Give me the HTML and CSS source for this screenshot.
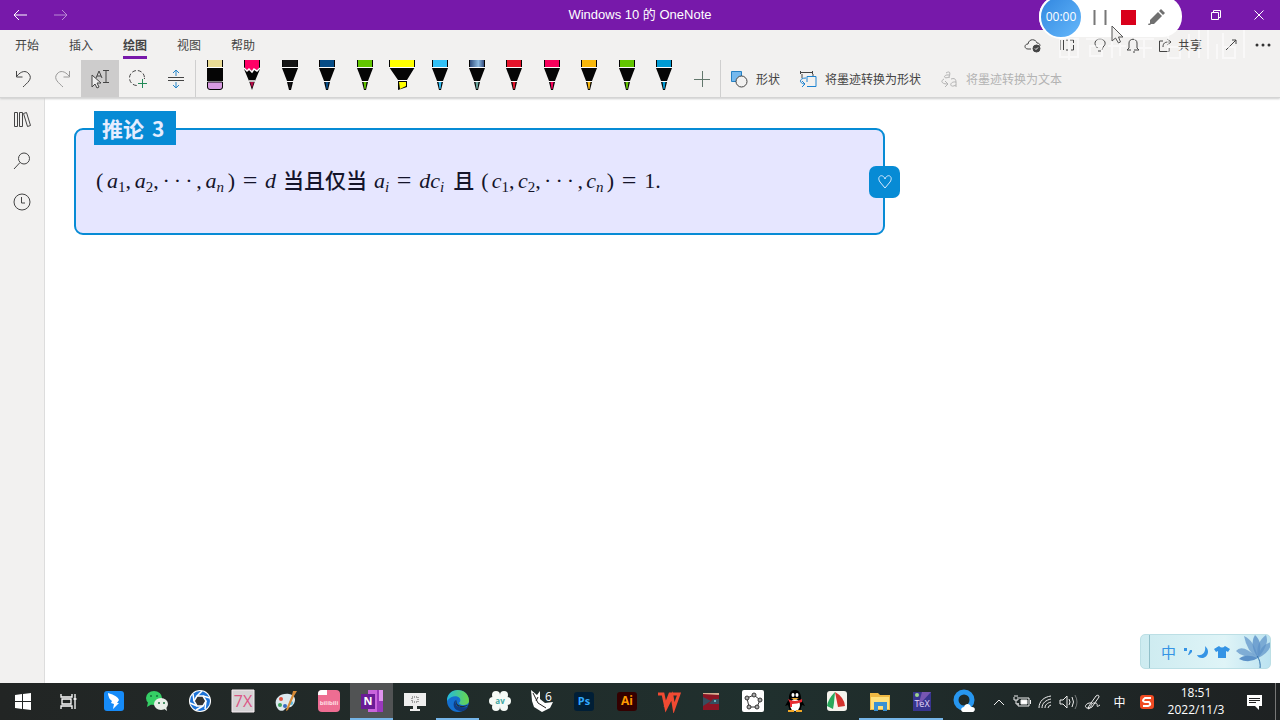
FILE: index.html
```html
<!DOCTYPE html>
<html lang="zh-CN">
<head>
<meta charset="utf-8">
<title>Windows 10 的 OneNote</title>
<link rel="stylesheet" href="styles.css">
</head>
<body>
<svg class="defs" aria-hidden="true">
  <symbol id="pen" viewBox="0 0 26 30">
    <path fill="currentColor" d="M5 0h16v7H5z"/><path d="M5 0h1v7H5zM20 0h1v7h-1z"/>
    <path d="M5 8h16l-5 13h-6z"/>
    <path fill="#fff" d="M5 7h16v1H5zM10 21h6v1h-6z" opacity=".8"/>
    <path d="M10 22h6l-2 8h-2z"/><path fill="currentColor" d="M11.500 22h3l-1 7h-1z"/>
  </symbol>
</svg>
<div class="app">
  <header class="titlebar">
    <nav class="history">
      <button aria-label="后退"><svg width="16" height="12" viewBox="0 0 16 12"><path d="M15 6H2M7 1L2 6l5 5"/></svg></button>
      <button class="dim" aria-label="前进"><svg width="16" height="12" viewBox="0 0 16 12"><path d="M1 6h13M9 1l5 5-5 5"/></svg></button>
    </nav>
    <h1>Windows 10 的 OneNote</h1>
    <div class="window-buttons">
      <button aria-label="还原"><svg width="12" height="12" viewBox="0 0 12 12"><path d="M1.500 3.500h7v7h-7zM3.500 3V1.500h7v7H9"/></svg></button>
      <button aria-label="关闭"><svg width="12" height="12" viewBox="0 0 12 12"><path d="M1.500 1.500l9 9M10.500 1.500l-9 9"/></svg></button>
    </div>
    <div class="recorder">
      <div class="timer">00:00</div>
      <button aria-label="暂停"><svg width="16" height="16" viewBox="0 0 16 16"><path d="M2.500 1v15M13.500 1v15" stroke="#777" stroke-width="2"/></svg></button>
      <button aria-label="停止"><svg width="16" height="16" viewBox="0 0 16 16"><path fill="#d9001b" stroke="none" d="M1 1h15v15H1z"/></svg></button>
      <button aria-label="画笔"><svg width="18" height="18" viewBox="0 0 18 18"><path fill="#707070" stroke="none" d="M2 12l8-8 4 4-8 8h-4zM11 3l2-2 4 4-2 2zM1 15l2 2H0z"/></svg></button>
      <svg class="pointer" width="14" height="20" viewBox="0 0 14 20"><path fill="#f2f1f0" stroke="#555" d="M2 1v15l3.500-3 3 5 2-1-2-5H13z"/></svg>
    </div>
  </header>

  <section class="ribbon">
    <div class="tabs-row">
      <nav class="tabs">
        <button>开始</button><button>插入</button><button class="selected">绘图</button><button>视图</button><button>帮助</button>
      </nav>
      <div class="actions">
        <button aria-label="同步"><svg width="18" height="16" viewBox="0 0 18 16"><path d="M7 12H4c-4 0-4-5 0-5 1-6 8-5 9-1 2 0 3 1 3 3"/><circle cx="12.500" cy="11.500" r="3.500" fill="#444"/><path stroke="#fff" d="M11 11.500l1 1 2-2"/></svg></button>
        <button aria-label="阅读视图"><svg width="16" height="16" viewBox="0 0 16 16"><path d="M1.500 3v10M4.500 3v10M7 3h2M7 13h2M11 3h3.500v3M14.500 8v5H12" /></svg></button>
        <button aria-label="提示"><svg width="16" height="16" viewBox="0 0 16 16"><path d="M5.500 11C1 7 3 2 8 2s7 5 3 8l-1 3M6 14h3"/></svg></button>
        <button aria-label="通知"><svg width="16" height="16" viewBox="0 0 16 16"><path d="M4 11V6c0-5 8-5 8 0v5l2 2H9M2 13l2-2M2 13h4M8 15h2"/></svg></button>
        <button class="share"><svg width="14" height="16" viewBox="0 0 14 16"><path d="M5 4H1.500v10.500H11V11M5 10c0-4 2-5 6-5M9 2l4 3-4 3"/></svg>共享</button>
        <button aria-label="全屏"><svg width="14" height="14" viewBox="0 0 14 14"><path d="M2 12L12 2M8 2h4v4"/></svg></button>
        <button aria-label="更多"><svg width="16" height="6" viewBox="0 0 16 6"><g fill="#333" stroke="none"><circle cx="2" cy="3" r="1.500"/><circle cx="8" cy="3" r="1.500"/><circle cx="14" cy="3" r="1.500"/></g></svg></button>
      </div>
      <svg class="watermark" viewBox="0 0 200 46" aria-hidden="true"><g fill="none" stroke="#fff" stroke-width="2" opacity=".5"><path d="M4 17h18v18H4zM13 14v24M30 17h18M34 24h12v10H34zM56 16v20M52 24h18M64 17v17M78 17h20M82 26h14M88 17v19M112 9v27h12V25h-12M133 12v24M143 6v30M152 4v33M161 22v15M167 11v25h12V25h-12M188 6v30"/></g></svg>
    </div>

    <div class="tools">
      <div class="edit-tools">
        <button aria-label="撤消"><svg width="20" height="20" viewBox="0 0 20 20"><path d="M2.500 2v6h6M3 7c4-5 9-6 12-2 4 5-2 9-6 13"/></svg></button>
        <button class="dim" aria-label="恢复"><svg width="20" height="20" viewBox="0 0 20 20"><path d="M17.500 2v6h-6M17 7C13 2 8 1 5 5c-4 5 2 9 6 13"/></svg></button>
        <button class="chosen" aria-label="选择对象或文本"><svg width="20" height="20" viewBox="0 0 20 20"><path d="M13 1.500h6M16 2v11M13 13.500h6M6 9l3-7 3 7M7 7h4"/><path fill="#eee" d="M2 6v12l3-3 2 4 2-1-2-4h4z"/></svg></button>
        <button aria-label="套索选择"><svg width="20" height="20" viewBox="0 0 20 20"><circle cx="9" cy="9" r="7.500" stroke-dasharray="4 2"/><path stroke="#f2f1f0" stroke-width="5" d="M10 15h9M15 10v9"/><path stroke="#218a56" d="M10 14.500h9M14.500 10v9"/></svg></button>
        <button aria-label="插入空间"><svg width="18" height="20" viewBox="0 0 18 20"><path d="M1 8.500h16M1 11.500h16"/><path stroke="#2786c9" d="M9 7V1M6 4l3-3 3 3M9 13v6M6 16l3 3 3-3"/></svg></button>
      </div>
      <div class="pens">
        <button aria-label="橡皮擦"><svg width="26" height="30" viewBox="0 0 26 30"><path d="M5 0h16v29H5z"/><path fill="#eadc95" d="M6 0h14v7H6z"/><path fill="#fff" d="M5 7h16v1H5zM5 21h16v1H5z"/><path fill="#f2f1f0" d="M5 27v3h16v-3l-2 3H7z"/><path fill="#d79be0" stroke="#050505" d="M5.500 22h15v5q0 2.500-2.500 2.500H8q-2.500 0-2.500-2.500z"/></svg></button>
        <button aria-label="铅笔"><svg width="26" height="30" viewBox="0 0 26 30"><path d="M5 0h16v9l-5 12-3 9-3-9L5 9z"/><path fill="#ff0066" d="M6 0h14v8l-3 3-2-2-2 2-2-2-2 2-3-3z"/><path fill="none" stroke="#fff" stroke-width="1.500" d="M5 8l3 3 2-2 3 3 2-3 3 2 3-3M10 21h6"/><path fill="#b30c46" d="M11 22h4l-2 6z"/></svg></button>
        <button class="black" aria-label="黑色笔"><svg width="26" height="30"><use href="#pen"/></svg></button>
        <button class="navy" aria-label="深蓝色笔"><svg width="26" height="30"><use href="#pen"/></svg></button>
        <button class="green" aria-label="绿色笔"><svg width="26" height="30"><use href="#pen"/></svg></button>
        <button aria-label="荧光笔"><svg width="26" height="30" viewBox="0 0 26 30"><path d="M0 0h26v7l-8 13v7l-9 3V20L0 7z"/><path fill="#ff0" d="M1 0h24v7H1zM10 22h7v4l-6 3z"/><path fill="#fff" d="M0 7h26v1H0zM9 20h9v1H9z"/></svg></button>
        <button class="sky" aria-label="天蓝色笔"><svg width="26" height="30"><use href="#pen"/></svg></button>
        <button class="galaxy" aria-label="银河笔"><svg width="26" height="30"><defs><linearGradient id="galaxy-cap"><stop stop-color="#315080"/><stop offset=".6" stop-color="#8dbbe0"/><stop offset="1" stop-color="#354d80"/></linearGradient></defs><use href="#pen"/><path fill="url(#galaxy-cap)" d="M6 0h14v7H6z"/></svg></button>
        <button class="red" aria-label="红色笔"><svg width="26" height="30"><use href="#pen"/></svg></button>
        <button class="pink" aria-label="粉色笔"><svg width="26" height="30"><use href="#pen"/></svg></button>
        <button class="gold" aria-label="金色笔"><svg width="26" height="30"><use href="#pen"/></svg></button>
        <button class="green" aria-label="浅绿色笔"><svg width="26" height="30"><use href="#pen"/></svg></button>
        <button class="blue" aria-label="蓝色笔"><svg width="26" height="30"><use href="#pen"/></svg></button>
      </div>
      <button class="add" aria-label="添加笔"><svg width="16" height="16" viewBox="0 0 16 16"><path stroke="#62776c" d="M0 8.500h16M8.500 0v16"/></svg></button>
      <div class="convert">
        <button><svg width="18" height="18" viewBox="0 0 18 18"><path fill="#75b9ee" stroke="#2581c4" d="M1.500 1.500h10v10h-10z"/><circle cx="11.500" cy="11.500" r="5.500" fill="#f2f1f0"/></svg>形状</button>
        <button><svg width="18" height="18" viewBox="0 0 18 18"><path d="M1 2.500h13M1.500 1v3M13.500 1v3M3 4v4M14 4v2"/><path stroke="#1c82d0" d="M8 12V6.500h9v10H8M7 8C0 8 0 13 5 14M3 11l3 3-3 3"/></svg>将墨迹转换为形状</button>
        <button class="disabled" disabled><svg width="18" height="18" viewBox="0 0 18 18"><path d="M6 3c5-3 4 1 3 5M9 5c-6-1-6 5 0 2M4 9c-4 2-2 5 3 5M5 11l3 3-3 3M11 9c6-2 5 3 5 8M16 12c-7-1-7 7 0 3"/></svg>将墨迹转换为文本</button>
      </div>
    </div>
  </section>

  <div class="workspace">
    <aside class="sidebar">
      <button aria-label="笔记本"><svg width="18" height="18" viewBox="0 0 18 18"><path d="M1.500 1.500h3v14h-3zM6.500 1.500h3v14h-3zM10.500 2.500l3-1 4 13-3 1z"/></svg></button>
      <button aria-label="搜索"><svg width="18" height="18" viewBox="0 0 18 18"><circle cx="11" cy="6.500" r="5.500"/><path d="M7 10.500L1 17"/></svg></button>
      <button aria-label="最近的笔记"><svg width="18" height="18" viewBox="0 0 18 18"><circle cx="9" cy="9" r="8"/><path d="M8.500 4v6H12"/></svg></button>
    </aside>
    <main class="page">
      <article class="corollary">
        <h2><span>推论</span><span>3</span></h2>
        <p class="formula">
          <span class="tuple"><b>(</b><span><i>a</i><sub>1</sub>,</span><span><i>a</i><sub>2</sub>,</span><span class="dots"><b>·</b><b>·</b><b>·</b></span><span>,</span><span><i>a</i><sub><i>n</i></sub></span><b>)</b></span>
          <span class="equals">=</span><i>d</i>
          <span class="words">当且仅当</span>
          <span><i>a</i><sub><i>i</i></sub></span><span class="equals">=</span><span class="product"><i>dc</i><sub><i>i</i></sub></span>
          <span class="words">且</span>
          <span class="tuple narrow"><b>(</b><span><i>c</i><sub>1</sub>,</span><span><i>c</i><sub>2</sub>,</span><span class="dots"><b>·</b><b>·</b><b>·</b></span><span>,</span><span><i>c</i><sub><i>n</i></sub></span><b>)</b></span>
          <span class="equals">=</span><span>1.</span>
        </p>
        <div class="heart"><svg width="16" height="16" viewBox="0 0 16 16"><path d="M8 14L3 8C-1 2 6-1 8 5c2-6 9-3 5 3z"/></svg></div>
      </article>
    </main>
    <div class="ime">
      <button>中</button>
      <svg width="8" height="12" viewBox="0 0 8 12"><path fill="#3594e5" d="M0 2h3v3H0zM6 4h2v2L5 9H4z"/></svg>
      <svg width="12" height="12" viewBox="0 0 12 12"><path fill="#3594e5" d="M8 0c6 5 2 12-3 12-3 0-4-1-5-3 6 1 9-3 8-9z"/></svg>
      <svg width="16" height="14" viewBox="0 0 16 14"><path fill="#3594e5" d="M5 1q3 3 6 0l5 3-2 3-2-1v7H4V6L2 7 0 4z"/></svg>
      <svg class="flower" width="38" height="35" viewBox="0 0 38 35"><g fill="#5c91c8"><path d="M23 24Q12 18 9 2q10 4 14 22z" opacity=".7"/><path d="M23 24Q14 11 20 1q9 8 3 23z" opacity=".8"/><path d="M23 24Q20 9 31 1q4 9-8 23z" opacity=".7"/><path d="M23 24Q24 12 36 8q0 10-13 16zM23 24Q7 9 1 17q5 6 22 7z" opacity=".7"/><path d="M23 24Q10 19 4 25q10 5 19-1z"/></g><path d="M22 22q4 5 3 13" fill="none" stroke="#3271ab"/></svg>
    </div>
  </div>

  <footer class="taskbar">
    <nav class="apps">
      <button aria-label="开始菜单"><svg viewBox="0 0 24 24"><path fill="#fff" d="M4 6l7-1v7H4zM12 5l8-1v8h-8zM4 13h7v7l-7-1zM12 13h8v8l-8-1z"/></svg></button>
      <button aria-label="任务视图"><svg viewBox="0 0 24 24"><path fill="none" stroke="#fff" stroke-width="1.300" d="M4 5v3h11V5M5 10h9v5H5zM4 20v-3h11v3M18 5v15M16.500 10h3"/></svg></button>
      <button aria-label="飞书"><svg viewBox="0 0 24 24"><rect x="2" y="2" width="20" height="20" rx="3" fill="#168bf8"/><path fill="#fff" d="M6 4q10 3 11 7l-2 3h2l-6 6 1-5-3-1 1-2q-4-3-4-8z"/></svg></button>
      <button aria-label="微信"><svg viewBox="0 0 24 24"><ellipse cx="9" cy="9" rx="8" ry="7" fill="#35ce65"/><path fill="#35ce65" d="M3 13l-1 5 5-3z"/><ellipse cx="16" cy="15" rx="7" ry="6" fill="#e8eee8"/><path fill="#e8eee8" d="M18 19l4 3-1-5z"/><g fill="#16713b"><circle cx="6" cy="7" r="1"/><circle cx="12" cy="7" r="1"/><circle cx="14" cy="14" r="1"/><circle cx="19" cy="14" r="1"/></g></svg></button>
      <button aria-label="照片"><svg viewBox="0 0 24 24"><circle cx="12" cy="12" r="11" fill="#fff"/><circle cx="12" cy="12" r="10" fill="#1d73d8"/><path fill="#333" stroke="#fff" stroke-width="1.500" d="M9 7h6l3 5-3 5H9l-3-5z"/><path stroke="#fff" stroke-width="1.500" d="M9 7l5-5M15 7l7 2M18 12l-1 8M15 17l-7 4M9 17l-7-3M6 12l-1-7"/></svg></button>
      <button aria-label="7X"><svg viewBox="0 0 24 24"><path fill="#d6d3d5" stroke="#f8eef2" d="M1 1h22v22H1z"/><text x="12" y="18" text-anchor="middle" font-size="16" fill="#dc5685">7X</text></svg></button>
      <button aria-label="画图"><svg viewBox="0 0 24 24"><path fill="#dce8ee" d="M2 16C0 9 7 4 15 5c6 1 8 6 4 11-3 4-6 1-8 4-3 4-8 1-9-4z"/><circle cx="7" cy="10" r="2" fill="#df513f"/><circle cx="6" cy="16" r="2" fill="#3ca45e"/><circle cx="11" cy="17" r="2" fill="#356bc0"/><circle cx="17" cy="14" r="2" fill="#58b9df"/><path fill="#d78b37" d="M19 2l4 0-3 5-6 14-2 1 1-4 5-12z"/></svg></button>
      <button aria-label="哔哩哔哩"><svg viewBox="0 0 24 24"><rect x="1" y="1" width="22" height="22" rx="4" fill="#ee6d92"/><path fill="#fff" d="M1 5q0-4 4-4h5v5H1z"/><text x="12" y="16" text-anchor="middle" font-size="6" font-weight="bold" fill="#ffe0e8">bilibili</text></svg></button>
      <button class="current" aria-label="OneNote"><svg viewBox="0 0 24 24"><path fill="#ca64dc" d="M8 1h15v22H8z"/><path fill="#9b38bd" d="M17 1h6v22h-6z"/><path fill="#e092ee" d="M19 1h4v11h-4z"/><path fill="#6b1b96" d="M1 5h14v15H1z"/><text x="8" y="16" text-anchor="middle" font-size="11" font-weight="bold" fill="#fff">N</text></svg></button>
      <button aria-label="投屏"><svg viewBox="0 0 24 24"><path fill="#eee" d="M1 4h22v13h-9v3h3v2H7v-2h3v-3H1z"/><path fill="none" stroke="#555" stroke-dasharray="1 1" d="M9 8h6v5H9z"/></svg></button>
      <button class="running" aria-label="Edge"><svg viewBox="0 0 24 24"><defs><linearGradient id="edge-top"><stop stop-color="#22b9df"/><stop offset="1" stop-color="#69d649"/></linearGradient></defs><circle cx="12" cy="12" r="11" fill="#146fcf"/><path fill="url(#edge-top)" d="M1 12C1-3 23-2 23 12c0 5-9 5-10 2 5-5-5-11-12-2z"/><path fill="#103c83" d="M10 11q-3 9 12 7c-3 6-12 5-14 0-1-3 0-6 2-7z"/><path fill="#232b2c" d="M12 9c-3 3-2 8 5 8l5-1c-3 3-13 4-12-4z"/></svg></button>
      <button aria-label="花瓣"><svg viewBox="0 0 24 24"><g fill="#f5faf6"><circle cx="8" cy="6" r="4"/><circle cx="16" cy="6" r="4"/><circle cx="19" cy="12" r="4"/><circle cx="16" cy="18" r="4"/><circle cx="8" cy="18" r="4"/><circle cx="5" cy="12" r="4"/><circle cx="12" cy="12" r="6"/></g><text x="12" y="15" text-anchor="middle" font-size="8" font-weight="bold" fill="#42a8a1">av</text></svg></button>
      <button aria-label="Rhino 6"><svg viewBox="0 0 24 24"><path fill="#fff" d="M1 1l6 5 3-4v8l5 4 8-1-3 6-8 4-8-5-2-6z"/><path stroke="#222" d="M3 4l5 10 8 5M8 8l-2 4" fill="none"/><text x="15" y="12" font-size="12" fill="#fff">6</text></svg></button>
      <button aria-label="Photoshop"><svg viewBox="0 0 24 24"><rect x="2" y="3" width="20" height="19" rx="3" fill="#001e36"/><text x="12" y="16" text-anchor="middle" font-size="11" font-weight="bold" fill="#31a8ff">Ps</text></svg></button>
      <button aria-label="Illustrator"><svg viewBox="0 0 24 24"><rect x="2" y="3" width="20" height="19" rx="3" fill="#330000"/><text x="12" y="16" text-anchor="middle" font-size="12" font-weight="bold" fill="#ff9a00">Ai</text></svg></button>
      <button aria-label="WPS"><svg viewBox="0 0 24 24"><path fill="none" stroke="#f14a32" stroke-width="3" d="M1 5h5l3 14 6-12 2 12 5-14h-9L8 18"/></svg></button>
      <button aria-label="录制工具"><svg viewBox="0 0 24 24"><path fill="#354f5f" d="M4 4h16v17H4z"/><path fill="#d6ae91" d="M4 4h16v2H4z"/><path fill="#8b1524" d="M4 5l16 1v4h-6l-4 5h10v6H4v-4l8-5-8-4z"/><path fill="#65b4bd" d="M15 11h2v2h-2z"/></svg></button>
      <button aria-label="GeoGebra"><svg viewBox="0 0 24 24"><rect x="1" y="1" width="22" height="22" rx="2" fill="#fff"/><g stroke="#333" fill="#aaa"><path fill="none" d="M6 9l7-3 6 5-3 7H8z"/><circle cx="6" cy="9" r="2"/><circle cx="13" cy="6" r="2"/><circle cx="19" cy="11" r="2"/><circle cx="16" cy="18" r="2"/><circle cx="8" cy="18" r="2"/></g></svg></button>
      <button aria-label="QQ"><svg viewBox="0 0 24 24"><path d="M6 10C5-2 19-2 18 10l4 7-3-1-2 6H7l-2-6-3 1z"/><ellipse cx="12" cy="16" rx="5" ry="6" fill="#fff"/><ellipse cx="10" cy="6" rx="1.500" ry="2" fill="#fff"/><ellipse cx="14" cy="6" rx="1.500" ry="2" fill="#fff"/><path fill="#f2a827" d="M8 9h8l-4 2zM5 21h6v2H5zM13 21h6v2h-6z"/><path fill="#e92b31" d="M5 10q7 4 14 0v3q-5 2-10 2v3H7v-4z"/></svg></button>
      <button aria-label="几何画板"><svg viewBox="0 0 24 24"><rect x="2" y="2" width="20" height="20" rx="3" fill="#f4f3ed"/><path fill="#d3322d" d="M10 3q9 5 10 14l-7 1z"/><path fill="#28a75b" d="M10 3q-7 7-8 14l6 3 1-6z"/></svg></button>
      <button class="running" aria-label="文件资源管理器"><svg viewBox="0 0 24 24"><path fill="#efb943" d="M2 4h8l2 2h10v15H2z"/><path fill="#ffe07b" d="M3 8h18v12H3z"/><path fill="#3a91d2" d="M6 13h13v9h-4v-5h-5v5H6z"/></svg></button>
      <button class="running" aria-label="TeX"><svg viewBox="0 0 24 24"><path fill="#38358f" d="M3 3h18v19H3z"/><path fill="#7756b2" d="M12 3h9L8 17z"/><circle cx="7" cy="6" r="2" fill="#9ed58c"/><text x="12" y="18" text-anchor="middle" font-size="9" fill="#e5d8fa">TeX</text></svg></button>
      <button aria-label="QQ浏览器"><svg viewBox="0 0 24 24"><circle cx="12" cy="11" r="8" fill="none" stroke="#2796ef" stroke-width="5"/><path fill="#fff" d="M11 23c-3-1-2-5 1-5 1-4 6-4 7 0 5-1 5 5 1 5z"/></svg></button>
    </nav>
    <div class="tray">
      <button aria-label="显示隐藏的图标"><svg viewBox="0 0 20 20"><path d="M5 13l5-5 5 5"/></svg></button>
      <button aria-label="电源"><svg viewBox="0 0 20 20"><path d="M7 6h10v8H6v-3M18.500 8v4M2 5v3h4V5M3 3v2M5 3v2M4 8v4h3"/><path fill="#fff" d="M9 8h6v4H9z"/></svg></button>
      <button aria-label="网络"><svg viewBox="0 0 20 20"><path d="M4 16C4 9 9 5 16 4M7 16c0-5 4-8 9-9M10 16c0-3 2-5 6-6M13 16q0-2 3-3"/></svg></button>
      <button aria-label="音量"><svg viewBox="0 0 20 20"><path d="M2 8h3l4-4v12l-4-4H2zM11 7q2 3 0 6M14 5q3 5 0 10"/><path opacity=".4" d="M17 3q4 7 0 14"/></svg></button>
      <button class="wide" aria-label="手写"><svg viewBox="0 0 20 20"><path d="M6 14L13 4q3-2 3 1l-7 10-4 2zM9 11c-6-1-9 5-4 5 4 1 2-6 7-5 5 0-1 6 5 2"/></svg></button>
      <button class="wide">中</button>
      <button class="wide" aria-label="搜狗输入法"><svg viewBox="0 0 20 20"><rect x="3" y="3" width="14" height="14" rx="3" fill="#f04b23" stroke="none"/><path stroke="#fff" stroke-width="2" d="M14 6H8q-4 3 0 4h4q3 3-1 4H6"/></svg></button>
      <time datetime="2022-11-03T18:51"><span>18:51</span><span>2022/11/3</span></time>
      <button class="messages" aria-label="通知中心"><svg viewBox="0 0 20 20"><path fill="#fff" stroke="none" d="M3 3h15v11h-3v4l-4-4H3z"/><path stroke="#222" d="M5 6.500h11M5 8.500h11M5 10.500h7"/></svg></button>
    </div>
  </footer>
</div>
</body>
</html>
```
FILE: styles.css
```css
* { box-sizing: border-box; }
body { margin: 0; font-family: "Liberation Sans", "Noto Sans CJK SC", sans-serif; }
button { display: flex; align-items: center; justify-content: center; padding: 0; border: 0; background: none; color: inherit; font: inherit; }
svg { display: block; flex: none; }
.defs { position: absolute; width: 0; height: 0; }
.app { height: 100vh; display: flex; flex-direction: column; background: #fff; overflow: hidden; }

.titlebar { position: relative; z-index: 3; flex: 0 0 30px; display: grid; grid-template-columns: 1fr auto 1fr; align-items: center; background: #7719aa; color: #fff; }
.titlebar h1 { margin: 0; font: 13px/30px "Liberation Sans", "Noto Sans CJK SC", sans-serif; }
.history { display: flex; gap: 25px; padding-left: 12px; }
.titlebar svg { fill: none; stroke: currentColor; }
.dim { opacity: .5; }
.window-buttons { justify-self: end; display: flex; gap: 31px; padding-right: 15px; }
.recorder { position: absolute; top: -4px; right: 98px; width: 143px; height: 41px; display: flex; align-items: center; gap: 12px; border-radius: 20px; background: #fff; }
.timer { width: 44px; height: 44px; margin-right: -3px; border: 2px solid #fff; border-radius: 50%; background: linear-gradient(135deg, #3186df, #65b8fb); font: 12px/40px "Open Sans", sans-serif; text-align: center; }
.recorder .pointer { position: absolute; left: 71px; top: 29px; }

.ribbon { position: relative; z-index: 2; flex: none; background: #f2f1f0; border-bottom: 1px solid #d4d4d4; box-shadow: 0 1px 2px #ccc; color: #444; font: 12px/16px "Noto Sans CJK SC", sans-serif; }
.ribbon svg { fill: none; stroke: currentColor; }
.tabs-row { position: relative; display: flex; justify-content: space-between; height: 30px; }
.tabs { display: flex; gap: 30px; padding-left: 15px; }
.tabs button { height: 29px; border-bottom: 3px solid transparent; padding-top: 3px; }
.tabs .selected { border-color: #7719aa; font-weight: 700; }
.actions { display: flex; align-items: center; gap: 17px; padding-right: 9px; }
.actions .share { gap: 6px; margin-right: 5px; }
.watermark { position: absolute; top: -8px; right: 24px; width: 200px; height: 46px; }
.tools { display: flex; height: 37px; }
.edit-tools { display: flex; padding-left: 5px; border-right: 1px solid #cfcfcf; }
.edit-tools button { width: 38px; }
.edit-tools .chosen { background: #cdcccc; }
.pens { flex: 0 0 487px; display: flex; }
.pens button { flex: 1; height: 30px; }
.pens svg { fill: #050505; stroke: none; }
.black { color: #151515; } .navy { color: #064c86; } .green { color: #62c500; }
.sky { color: #32c0f5; } .galaxy { color: #6aa69e; } .red { color: #e5132a; }
.pink { color: #f8005b; } .gold { color: #f8b80c; } .blue { color: #009bd4; }
.add { width: 38px; border-right: 1px solid #cfcfcf; }
.convert { display: flex; gap: 19px; padding-left: 9px; white-space: nowrap; }
.convert button { gap: 8px; }
.convert .disabled { color: #b3b3b3; }

.workspace { position: relative; flex: 1; min-height: 0; display: flex; }
.sidebar { flex: 0 0 45px; display: flex; flex-direction: column; align-items: center; gap: 23px; padding-top: 13px; border-right: 1px solid #ddd; background: #f2f1f0; color: #444; }
.sidebar svg { fill: none; stroke: currentColor; }
.page { flex: 1; padding: 30px 0 0 29px; }
.corollary { position: relative; width: 68%; max-width: 811px; height: 107px; padding: 35px 20px; border: 2px solid #078bd5; border-radius: 9px; background: #e6e6ff; color: #14142a; }
.corollary h2 { position: absolute; left: 18px; top: -19px; display: flex; gap: 8px; margin: 0; padding: 0 12px 0 8px; background: #078bd5; color: #e5edff; font: 700 21px/34px "Noto Sans CJK SC", sans-serif; }
.formula { margin: 0; display: flex; align-items: center; gap: 7px; font: 22px/32px "Liberation Serif", serif; white-space: nowrap; }
.formula b { font-weight: 400; }
.formula sub { font-size: 15px; line-height: 0; vertical-align: -4px; }
.tuple { width: 139px; display: flex; justify-content: space-between; }
.narrow { width: 133px; }
.dots { display: flex; gap: 4px; }
.equals { width: 16px; text-align: center; font-size: 26px; }
.product { width: 27px; }
.words { padding-bottom: 4px; line-height: 28px; font-family: "Noto Sans CJK SC", sans-serif; font-size: 21px; font-weight: 500; }
.heart { position: absolute; right: -17px; top: 36px; width: 31px; height: 32px; display: grid; place-items: center; border-radius: 7px; background: #078bd5; }
.heart svg { fill: none; stroke: #d8eaff; }
.ime { position: absolute; right: 9px; bottom: 14px; width: 131px; height: 35px; display: flex; align-items: center; padding-left: 8px; border: 1px solid #bcdfe5; border-radius: 5px; background: linear-gradient(90deg, #cdebf0, #dff4f7 65%, #bce3f1); overflow: hidden; }
.ime button { height: 35px; padding: 0 8px 0 11px; border-left: 1px solid #92c0ca; color: #3594e5; font: 15px/20px "Noto Sans CJK SC", sans-serif; }
.ime svg { margin-right: 5px; }
.ime .flower { margin: 0; }

.taskbar { flex: 0 0 37px; display: flex; background: linear-gradient(90deg, #222524, #20302e 60%, #1e2122); color: #fff; }
.apps { flex: 1; display: flex; min-width: 0; }
.apps button { flex: 1; border-bottom: 2px solid transparent; }
.apps button:nth-child(-n+11) { flex: 0 1 43px; }
.apps button:nth-child(-n+2) { flex: 0 1 46px; }
.apps svg { width: 24px; height: 24px; }
.apps text { font-family: "Open Sans", sans-serif; }
.apps .current { background: #515354; border-color: #75b5e8; }
.apps .running { border-color: #75b5e8; }
.tray { flex: 0 0 295px; display: flex; padding-left: 2px; }
.tray button { width: 23px; font: 12px/16px "Noto Sans CJK SC", sans-serif; }
.tray svg { width: 20px; height: 20px; fill: none; stroke: #eee; }
.tray .wide { width: 27px; }
.tray time { width: 72px; padding-top: 1px; display: flex; flex-direction: column; align-items: center; font: 12px/17px "Open Sans", sans-serif; }
.tray .messages { width: 44px; margin-right: 3px; border-right: 1px solid #777; }
```
